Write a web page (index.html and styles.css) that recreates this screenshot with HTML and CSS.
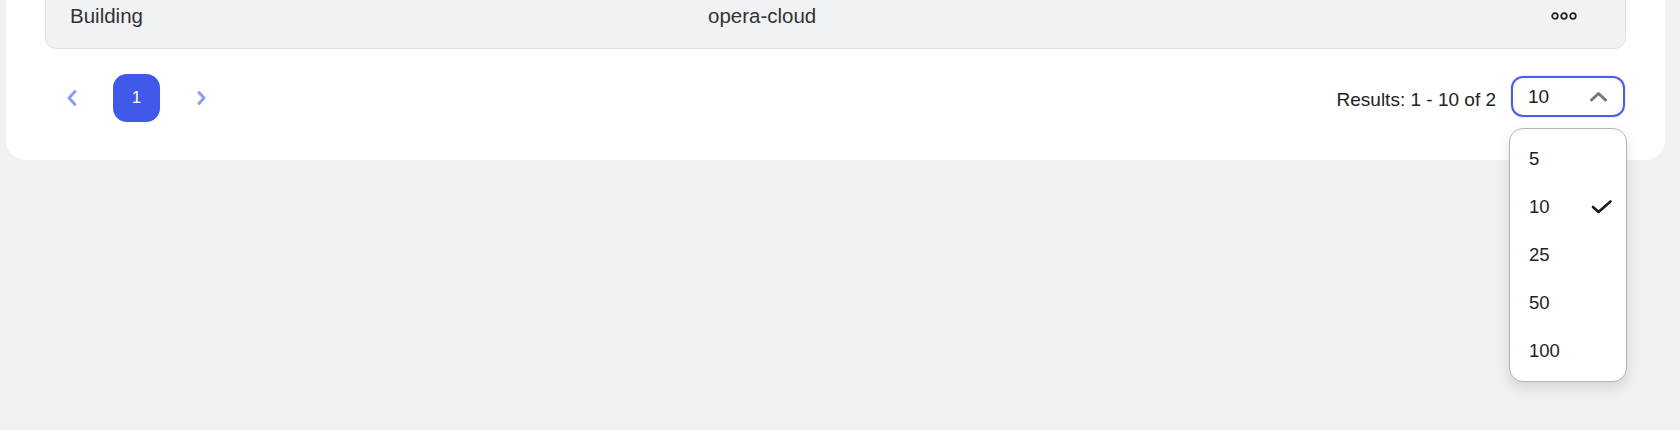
FILE: index.html
```html
<!DOCTYPE html>
<html lang="en">
<head>
<meta charset="utf-8">
<title>Table pagination</title>
<link rel="stylesheet" href="styles.css">
</head>
<body>
<div class="card">
  <div class="row">
    <div class="cell">Building</div>
    <div class="cell">opera-cloud</div>
    <div class="cell actions">
      <svg width="26" height="8" viewBox="0 0 26 8" aria-hidden="true">
        <circle cx="4" cy="4" r="2.8" fill="none" stroke="#222" stroke-width="1.8"/>
        <circle cx="13" cy="4" r="2.8" fill="none" stroke="#222" stroke-width="1.8"/>
        <circle cx="22" cy="4" r="2.8" fill="none" stroke="#222" stroke-width="1.8"/>
      </svg>
    </div>
  </div>
  <div class="pagination">
    <div class="pager">
      <button class="nav-btn" aria-label="Previous">
        <svg width="12" height="18" viewBox="0 0 12 18"><path d="M9 2.5 L3 9 L9 15.5" fill="none" stroke="#8c9bf3" stroke-width="3" stroke-linecap="round" stroke-linejoin="round"/></svg>
      </button>
      <button class="page-btn">1</button>
      <button class="nav-btn" aria-label="Next">
        <svg width="12" height="18" viewBox="0 0 12 18"><path d="M4 3.5 L9 9 L4 14.5" fill="none" stroke="#8c9bf3" stroke-width="3" stroke-linecap="round" stroke-linejoin="round"/></svg>
      </button>
    </div>
    <div class="results">
      <span class="results-text">Results: 1 - 10 of 2</span>
      <div class="select-wrap">
        <div class="select">
          <span>10</span>
          <svg width="19" height="11" viewBox="0 0 19 11"><path d="M2.5 9 L9.5 2.5 L16.5 9" fill="none" stroke="#777" stroke-width="3" stroke-linecap="round" stroke-linejoin="round"/></svg>
        </div>
        <ul class="menu">
          <li>5</li>
          <li class="selected">10
            <svg width="22" height="14" viewBox="0 0 22 14"><path d="M2 7 L7.5 12 L19.5 1.5" fill="none" stroke="#1a1a1a" stroke-width="2.6" stroke-linecap="round" stroke-linejoin="round"/></svg>
          </li>
          <li>25</li>
          <li>50</li>
          <li>100</li>
        </ul>
      </div>
    </div>
  </div>
</div>
</body>
</html>
```
FILE: styles.css
```css
* { box-sizing: border-box; }
html, body { margin: 0; padding: 0; }
body {
  background: #f0f1f0;
  font-family: "Liberation Sans", Arial, Helvetica, sans-serif;
  color: #333;
  height: 430px;
  overflow: hidden;
}
.card {
  margin: -40px 0 0 6px;
  width: 1659px;
  background: #fff;
  border-radius: 0 0 20px 20px;
  padding: 22px 39px 38px 39px;
}
.row {
  display: grid;
  grid-template-columns: 638px 1fr auto;
  align-items: center;
  height: 67px;
  padding: 0 48px 0 24px;
  background: #f1f2f4;
  border: 1px solid #e1e2e4;
  border-radius: 0 0 11px 11px;
  font-size: 20.5px;
  color: #333;
}
.actions { display: flex; align-items: center; }
.actions svg { display: block; }
.pagination {
  margin-top: 25px;
  height: 48px;
  display: flex;
  align-items: center;
  justify-content: space-between;
  padding: 0 1px 0 3px;
}
.pager { display: flex; align-items: center; gap: 17px; }
button {
  border: 0;
  background: none;
  padding: 0;
  font-family: inherit;
  cursor: pointer;
}
.nav-btn {
  width: 48px;
  height: 48px;
  display: flex;
  align-items: center;
  justify-content: center;
}
.nav-btn svg { display: block; }
.page-btn {
  width: 47px;
  height: 48px;
  border-radius: 14px;
  background: #4159e9;
  color: #fff;
  font-size: 17px;
}
.results { display: flex; align-items: center; gap: 15px; }
.results-text { font-size: 19px; color: #222; margin-top: 3px; }
.select-wrap { position: relative; }
.select {
  width: 114px;
  height: 41px;
  border: 2px solid #4a5ee9;
  border-radius: 12px;
  box-shadow: 0 0 0 1px rgba(0,0,0,0.07);
  display: flex;
  align-items: center;
  justify-content: space-between;
  padding: 0 15px 0 15px;
  font-size: 19px;
  color: #222;
  margin-top: -3px;
}
.select svg { display: block; margin-top: -1px; }
.menu {
  position: absolute;
  top: calc(100% + 11px);
  left: -2px;
  width: 118px;
  margin: 0;
  padding: 6px 0;
  list-style: none;
  background: #fff;
  border: 1px solid #b3b3b6;
  border-radius: 14px;
  box-shadow: 0 6px 14px rgba(0,0,0,0.12);
}
.menu li {
  height: 48px;
  display: flex;
  align-items: center;
  justify-content: space-between;
  padding: 0 13px 0 19px;
  font-size: 18.5px;
  color: #222;
}
.menu li svg { display: block; }
```
